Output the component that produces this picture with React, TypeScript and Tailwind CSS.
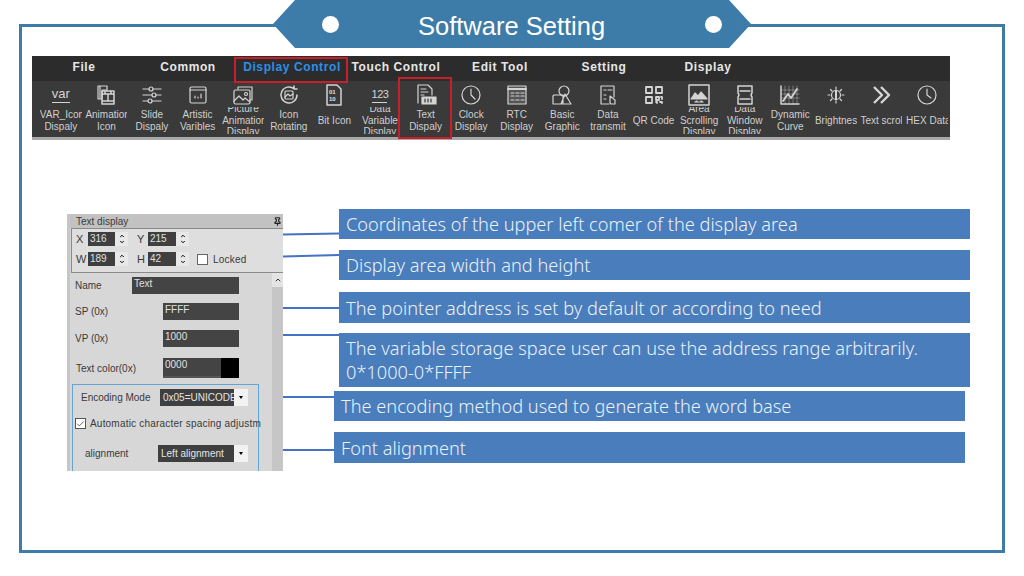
import type { ReactNode } from 'react';
import { ChevronUp, ChevronDown, Check, Pin } from 'lucide-react';

const tabs = ['File', 'Common', 'Display Control', 'Touch Control', 'Edit Tool', 'Setting', 'Display'];

const Ico = ({ children }: { children: ReactNode }) => (
  <svg width="24" height="24" viewBox="0 0 24 24" fill="none" stroke="#d4d4d4" strokeWidth="1.2" strokeLinecap="round" strokeLinejoin="round">
    {children}
  </svg>
);

const small = { fontSize: 6, fontFamily: 'Liberation Sans', fill: '#e0e0e0', stroke: 'none', fontWeight: 700 } as const;

const tools: { label: string[]; icon: ReactNode }[] = [
  {
    label: ['VAR_Icon', 'Dispaly'],
    icon: (
      <div className="flex flex-col items-center">
        <span className="text-[13px] leading-[13px] text-[#d4d4d4]">var</span>
        <span className="mt-[2px] h-px w-[18px] bg-[#d4d4d4]" />
      </div>
    ),
  },
  {
    label: ['Animation', 'Icon'],
    icon: (
      <Ico>
        <path d="M4 3h9v4H8v9H4zM6 3v13" />
        <path d="M8 8h12v13H8zM8 11h12M8 18h12M14 11v7M11 8v3M17 8v3" strokeWidth="1.5" />
      </Ico>
    ),
  },
  {
    label: ['Slide', 'Dispaly'],
    icon: (
      <Ico>
        <path d="M3 6h6M13 6h8M3 12h9M16 12h5M3 18h5M12 18h9" />
        <circle cx="11" cy="6" r="2" />
        <circle cx="14" cy="12" r="2" />
        <circle cx="10" cy="18" r="2" />
      </Ico>
    ),
  },
  {
    label: ['Artistic', 'Varibles'],
    icon: (
      <Ico>
        <rect x="4" y="4" width="16" height="16" rx="1.5" />
        <path d="M4 7h16M9 15v-2M12 15v-1M15 15v-4" />
      </Ico>
    ),
  },
  {
    label: ['Picture', 'Animation', 'Display'],
    icon: (
      <Ico>
        <path d="M7 6V4h14v13h-2" />
        <rect x="3" y="7" width="16" height="14" rx="1.5" />
        <path d="M3 18l5-5 4 4 2-2 5 4" />
        <circle cx="15" cy="11" r="1.5" />
      </Ico>
    ),
  },
  {
    label: ['Icon', 'Rotating'],
    icon: (
      <Ico>
        <path d="M20 12a8 8 0 1 1-3-6.3M17 3v3h3" strokeWidth="1.5" />
        <rect x="8" y="8" width="8" height="8" rx="1" />
        <path d="M8 14l3-3 2 2 3-2" />
      </Ico>
    ),
  },
  {
    label: ['Bit Icon'],
    icon: (
      <Ico>
        <path d="M5 2h10l4 4v16H5z" strokeWidth="1.5" />
        <text x="7" y="11" style={small}>01</text>
        <text x="7" y="18" style={small}>10</text>
      </Ico>
    ),
  },
  {
    label: ['Data', 'Variable', 'Display'],
    icon: (
      <div className="flex flex-col items-center">
        <span className="text-[11px] leading-[13px] tracking-[-0.5px] text-[#d4d4d4]">123</span>
        <span className="mt-[1px] h-px w-[15px] bg-[#d4d4d4]" />
      </div>
    ),
  },
  {
    label: ['Text', 'Dispaly'],
    icon: (
      <Ico>
        <path d="M4 20V2h10l4 4v6M7 6h5M7 9h7M7 12h3" />
        <rect x="8" y="14" width="14" height="7" fill="#d4d4d4" />
        <path d="M11 16v3M14 16v3M17 16v3" stroke="#333" />
      </Ico>
    ),
  },
  {
    label: ['Clock', 'Display'],
    icon: (
      <Ico>
        <circle cx="12" cy="12" r="9" />
        <path d="M12 6v6l4 4" />
      </Ico>
    ),
  },
  {
    label: ['RTC', 'Display'],
    icon: (
      <Ico>
        <rect x="3" y="3" width="18" height="18" fill="#555" />
        <path d="M3 6h18" strokeWidth="2" />
        <path d="M6 10h3M11 10h3M16 10h3M6 13h3M11 13h3M16 13h3M6 17h3M11 17h3M16 17h3" />
      </Ico>
    ),
  },
  {
    label: ['Basic', 'Graphic'],
    icon: (
      <Ico>
        <circle cx="14" cy="8" r="5" />
        <path d="M4 12h9v9H3v-8zM15 11l6 10H11z" />
      </Ico>
    ),
  },
  {
    label: ['Data', 'transmit'],
    icon: (
      <Ico>
        <path d="M18 14V3H5v18h8" />
        <path d="M8 7h2M12 7h4M8 12h2M8 16h2" />
        <path d="M14 20v-7l5 4v4h-4z" />
      </Ico>
    ),
  },
  {
    label: ['QR Code'],
    icon: (
      <Ico>
        <path d="M4 4h6v6H4zM14 4h6v6h-6zM4 14h6v6H4z" strokeWidth="1.8" />
        <path d="M14 14h3v3h-3zM19 14h1v2M18 19h2v1M14 19h1v1" strokeWidth="1.8" />
      </Ico>
    ),
  },
  {
    label: ['Area', 'Scrolling', 'Display'],
    icon: (
      <Ico>
        <rect x="2" y="2" width="20" height="20" strokeWidth="1.5" />
        <path d="M4 16l4-6 3 3 3-4 6 7z" fill="#d4d4d4" />
        <path d="M8 19h8M8 19l2-1M16 19l-2-1" />
      </Ico>
    ),
  },
  {
    label: ['Data', 'Window', 'Display'],
    icon: (
      <Ico>
        <path d="M5 3h14v7a3 3 0 0 0 0 4v7H5v-7a3 3 0 0 0 0-4z" strokeWidth="1.5" />
        <path d="M7 8h10M7 16h10" strokeWidth="1.5" />
      </Ico>
    ),
  },
  {
    label: ['Dynamic', 'Curve'],
    icon: (
      <Ico>
        <path d="M3 3v18h18" strokeWidth="1.5" />
        <path d="M7 3v18M11 3v18M15 3v18M19 3v18M3 7h18M3 11h18M3 15h18" strokeWidth=".4" />
        <path d="M5 18l5-7 3 4 6-9" strokeWidth="1.8" />
      </Ico>
    ),
  },
  {
    label: ['Brightness'],
    icon: (
      <Ico>
        <circle cx="12" cy="12" r="4.5" />
        <path d="M12 7.5v9" strokeWidth="2" />
        <path d="M12 4v2M12 18v2M4 12h2M18 12h2M6.5 6.5l1.5 1.5M16 16l1.5 1.5M17.5 6.5L16 8M6.5 17.5L8 16" />
      </Ico>
    ),
  },
  {
    label: ['Text scroll'],
    icon: (
      <Ico>
        <path d="M5 4l8 8-8 8M12 4l8 8-8 8" strokeWidth="2.4" strokeLinecap="butt" />
      </Ico>
    ),
  },
  {
    label: ['HEX Data'],
    icon: (
      <Ico>
        <circle cx="12" cy="12" r="9" />
        <path d="M12 6v6l4 3" />
      </Ico>
    ),
  },
];

const callouts = [
  { text: 'Coordinates of the upper left comer of the display area', cls: 'h-[30px]' },
  { text: 'Display area width and height', cls: 'mt-[11px] h-[30px]' },
  { text: 'The pointer address is set by default or according to need', cls: 'mt-[12px] h-[31px]' },
  {
    text: 'The variable storage space user can use the address range arbitrarily.\n0*1000-0*FFFF',
    cls: 'mt-[10px] h-[54px]',
  },
  { text: 'The encoding method used to generate the word base', cls: 'mt-[4px] -ml-[5px] h-[30px]' },
  { text: 'Font alignment', cls: 'mt-[11px] -ml-[5px] h-[31px]' },
];

const Spin = () => (
  <div className="flex h-full w-[13px] flex-col items-center justify-center bg-[#e8e8e8] text-black">
    <ChevronUp size={6} strokeWidth={4} />
    <ChevronDown size={6} strokeWidth={4} />
  </div>
);

const Field = ({ value, spin = true, cls }: { value: string; spin?: boolean; cls: string }) => (
  <div className={`flex h-[14px] ${cls}`}>
    <div className="flex-1 bg-[#3f3f3f] pl-[2px] text-[10px] leading-[14px] text-[#e0e0e0]">{value}</div>
    {spin && <Spin />}
  </div>
);

const Input = ({ value, cls }: { value: string; cls: string }) => (
  <div className={`h-[17px] bg-[#444444] pl-[2px] text-[10px] leading-[14px] text-[#e0e0e0] ${cls}`}>{value}</div>
);

const Select = ({ value, cls }: { value: string; cls: string }) => (
  <div className={`flex h-[17px] ${cls}`}>
    <div className="flex-1 overflow-hidden whitespace-nowrap bg-[#3f3f3f] pl-[3px] text-[10px] leading-[17px] text-[#e4e4e4]">{value}</div>
    <div className="flex w-[14px] items-center justify-center bg-[#f2f2f2]">
      <span className="border-x-[2.5px] border-t-[3px] border-x-transparent border-t-black" />
    </div>
  </div>
);

export default function App() {
  return (
    <div className="relative h-[576px] w-[1024px] overflow-hidden bg-white font-['Liberation_Sans',sans-serif]">
      {/* header tag sits over the frame line */}
      <div className="absolute left-[273px] top-0 z-10 flex h-[48px] w-[478px] items-center bg-[#3d7ca8] pl-[49px] [clip-path:polygon(22px_0,456px_0,478px_24px,456px_48px,22px_48px,0_24px)]">
        <span className="h-[17px] w-[17px] rounded-full bg-white" />
        <span className="ml-[79px] w-[187px] whitespace-nowrap pt-[4px] text-center text-[25.5px] leading-[30px] text-white">Software Setting</span>
        <span className="ml-[100px] h-[17px] w-[17px] rounded-full bg-white" />
      </div>

      <div className="ml-[19px] mt-[24px] h-[529px] w-[986px] border-[3px] border-[#3d7ca8] pl-[10px] pt-[29px]">
        {/* toolbar */}
        <div className="w-[918px] border-b-[3px] border-[#a8a8a8] bg-[#3a3a3a]">
          <div className="flex h-[25px] bg-[#2c2c2c]">
            {tabs.map((tab) => (
              <div
                key={tab}
                className={`relative w-[104px] text-center text-[12px] font-bold leading-[22px] tracking-[0.6px] ${
                  tab === 'Display Control' ? 'text-[#2e8fe6]' : 'text-[#e6e6e6]'
                }`}
              >
                {tab}
                {tab === 'Display Control' && (
                  <span className="absolute -left-[6px] -right-[4px] top-px h-[26px] border-2 border-[#c8202a]" />
                )}
              </div>
            ))}
          </div>
          <div className="flex h-[56px] pl-[6px]">
            {tools.map((tool) => (
              <div key={tool.label.join(' ')} className="relative flex h-full w-[45.6px] flex-col items-center">
                <div className="flex h-[26px] w-full items-center justify-center pb-[1px] pt-[3px]">{tool.icon}</div>
                <div className="flex h-[27px] w-[42px] flex-col justify-center overflow-hidden text-center text-[10px] leading-[11.5px] text-[#cfcfcf]">
                  {tool.label.map((line) => (
                    <span key={line} className="whitespace-nowrap">{line}</span>
                  ))}
                </div>
                {tool.label[0] === 'Text' && (
                  <span className="absolute -left-[5px] -right-[4px] -top-[4px] h-[62px] border-2 border-[#c8202a]" />
                )}
              </div>
            ))}
          </div>
        </div>

        <div className="ml-[35px] mt-[69px] flex items-start">
          {/* property panel */}
          <div className="mt-[5px] flex h-[257px] w-[216px] flex-col border-l-[3px] border-[#c6c6c6] bg-[#d7d7d7] text-[10px] text-[#3a3a3a]">
            <div className="flex h-[14px] items-center justify-between bg-[#c2c2c2] pl-[6px] pr-[1px] text-[10px]">
              <span>Text display</span>
              <Pin size={9} strokeWidth={3} className="text-[#222]" />
            </div>
            <div className="ml-[1px] h-[45px] border border-r-0 border-[#8a8a8a] bg-[#dedede] pl-[4px] pt-[3px]">
              <div className="flex h-[14px] items-center">
                <span className="w-[12px] text-[11px]">X</span>
                <Field value="316" cls="w-[40px]" />
                <span className="ml-[9px] w-[11px] text-[11px]">Y</span>
                <Field value="215" cls="w-[41px]" />
              </div>
              <div className="mt-[6px] flex h-[14px] items-center">
                <span className="w-[12px] text-[11px]">W</span>
                <Field value="189" cls="w-[40px]" />
                <span className="ml-[9px] w-[11px] text-[11px]">H</span>
                <Field value="42" cls="w-[41px]" />
                <span className="ml-[8px] h-[11px] w-[11px] border border-[#666] bg-white" />
                <span className="ml-[5px] tracking-[0.2px]">Locked</span>
              </div>
            </div>
            <div className="flex flex-1 overflow-hidden">
              <div className="flex-1 pl-[5px]">
                <div className="mt-[4px] flex items-center">
                  <span className="w-[57px]">Name</span>
                  <Input value="Text" cls="w-[107px]" />
                </div>
                <div className="mt-[9px] flex items-center">
                  <span className="w-[88px]">SP (0x)</span>
                  <Input value="FFFF" cls="w-[76px]" />
                </div>
                <div className="mt-[10px] flex items-center">
                  <span className="w-[88px]">VP (0x)</span>
                  <Input value="1000" cls="w-[76px]" />
                </div>
                <div className="mt-[11px] flex h-[20px] items-center">
                  <span className="ml-[1px] w-[87px]">Text color(0x)</span>
                  <div className="flex h-[20px] w-[76px]">
                    <div className="flex-1 border-b-2 border-[#555] bg-[#444444] pl-[2px] leading-[14px] text-[#e0e0e0]">0000</div>
                    <div className="w-[18px] bg-black" />
                  </div>
                </div>
                <div className="-ml-[3px] mt-[6px] h-[90px] w-[187px] border border-b-0 border-[#62a6d6]">
                  <div className="mt-[4px] flex items-center pl-[8px]">
                    <span className="w-[79px]">Encoding Mode</span>
                    <Select value="0x05=UNICODE" cls="w-[88px]" />
                  </div>
                  <div className="mt-[10px] flex items-center pl-[2px]">
                    <span className="flex h-[11px] w-[11px] items-center justify-center border border-[#555] bg-white">
                      <Check size={10} strokeWidth={2} className="text-[#333]" />
                    </span>
                    <span className="ml-[4px] whitespace-nowrap tracking-[0.2px]">Automatic character spacing adjustm</span>
                  </div>
                  <div className="mt-[14px] flex items-center pl-[12px]">
                    <span className="w-[73px]">alignment</span>
                    <Select value="Left alignment" cls="w-[90px]" />
                  </div>
                </div>
              </div>
              <div className="w-[11px] bg-[#c6c6c6]">
                <div className="flex h-[14px] items-center justify-center bg-[#e4e4e4]">
                  <ChevronUp size={8} strokeWidth={3} className="text-[#333]" />
                </div>
              </div>
            </div>
          </div>

          {/* leader lines from panel rows to callouts */}
          <svg width="56" height="254" className="shrink-0" stroke="#4472c4" strokeWidth="2">
            <path d="M0 25.5L56 24.5M0 47.5L56 46M0 99H56M0 126H56M0 188H56M0 241H56" />
          </svg>

          <div className="relative w-[631px] font-['Noto_Sans',sans-serif] text-[18.2px] font-light text-[#e9f1f9]">
            {callouts.map((c) => (
              <div
                key={c.text}
                className={`flex w-[631px] items-center whitespace-pre-line bg-[#4a7dbb] pl-[7px] leading-[24px] ${c.cls}`}
              >
                {c.text}
              </div>
            ))}
          </div>
        </div>
      </div>
    </div>
  );
}
